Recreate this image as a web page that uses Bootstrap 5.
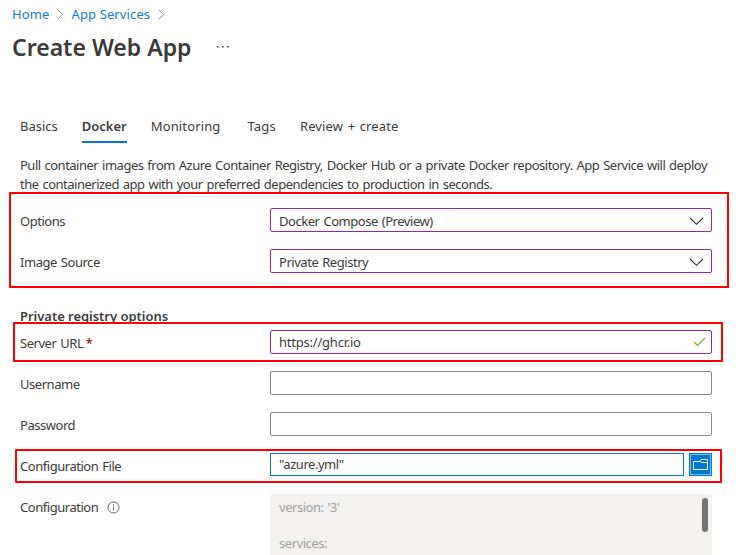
<!DOCTYPE html>
<html lang="en">
<head>
<meta charset="utf-8">
<meta name="viewport" content="width=device-width, initial-scale=1">
<title>Create Web App</title>
<link rel="stylesheet" href="https://cdn.jsdelivr.net/npm/bootstrap@5.3.0/dist/css/bootstrap.min.css">
<style>
body{font-family:"Noto Sans",sans-serif;font-size:13px;line-height:19px;color:#3b3a39;background:#fff;height:555px;overflow:hidden}
.crumbs{height:24px;padding:4px 0 0 12px;letter-spacing:.12px;gap:7.5px}
.crumbs a{color:#0f7bd4}
.page-title{font-size:23px;line-height:32px;font-weight:600;margin:0}
.title-row{padding:7px 0 0 12px;gap:26px}
.steps{margin:53px 0 0 20px;gap:24px}
.steps .nav-link{color:#3b3a39;padding:0 0 5px;border-radius:0;line-height:20px;height:27px}
.steps .nav-link.active{font-weight:600;border-bottom:2px solid #0078d4}
.steps .tab-wide{letter-spacing:.13px;word-spacing:1px}
.steps .tab-tags{margin-left:3px;letter-spacing:.2px}
.intro{margin:13px 0 0 20px;width:700px;letter-spacing:-.5px;word-spacing:1px;white-space:nowrap}
.fields{padding-left:20px;letter-spacing:-.46px;word-spacing:1px}
.fields-top{padding-top:14px}
.field-row{height:24px;margin-bottom:17px}
.field-label{width:250px;padding-top:4px}
.label-info{gap:9px}
.info-icon{margin-top:3px}
.field-box{width:442px;height:24px;border:1px solid #8a8886;border-radius:2px;padding:0 5px 0 8px}
.pick-text{padding-top:2px}
.url-text{letter-spacing:-.22px}
.edited{border-color:#8a2da5}
.file-box{width:414px;height:23px;border-color:#0078d4;border-radius:0}
.browse{width:23px;height:23px;margin-left:5px;background:#0078d4}
.section-head{font-size:13px;line-height:19px;font-weight:600;margin:0 0 4px 20px;padding-top:17px;letter-spacing:-.03px}
.yaml{width:442px;height:70px;background:#f3f2f1;color:#a19f9d;padding:4px 4px 0 9px;line-height:18px;border-radius:2px 2px 0 0}
.thumb{width:6px;height:34px;border-radius:3px;background:#737373}
.required{color:#a4262c;letter-spacing:0;font-weight:600;margin-left:-1.5px}
.callout{position:absolute;border:2px solid #f00;border-radius:1px;pointer-events:none}
.callout-options{left:9px;top:192px;width:720px;height:96px}
.callout-server{left:13px;top:322px;width:710px;height:40px}
.callout-file{left:15px;top:449px;width:707px;height:34px}
svg{display:block;flex:none;fill:none}
</style>
<script src="https://cdn.jsdelivr.net/npm/bootstrap@5.3.0/dist/js/bootstrap.bundle.min.js"></script>
</head>
<body class="position-relative">
<nav class="crumbs d-flex align-items-center">
  <a class="text-decoration-none" href="#">Home</a>
  <svg width="7" height="11" stroke="#8a8886"><path d="M1 1l4.700 4.500L1 10"/></svg>
  <a class="text-decoration-none" href="#">App Services</a>
  <svg width="7" height="11" stroke="#8a8886"><path d="M1 1l4.700 4.500L1 10"/></svg>
</nav>
<header class="title-row d-flex align-items-center">
  <h1 class="page-title">Create Web App</h1>
  <svg width="12" height="2"><path fill="#484644" d="M0 0h1.600v1.600H0zM5 0h1.600v1.600H5zM10 0h1.600v1.600h-1.600z"/></svg>
</header>
<ul class="nav steps">
  <li><a class="nav-link" href="#">Basics</a></li>
  <li><a class="nav-link active" href="#">Docker</a></li>
  <li><a class="nav-link tab-wide" href="#">Monitoring</a></li>
  <li><a class="nav-link tab-tags" href="#">Tags</a></li>
  <li><a class="nav-link tab-wide" href="#">Review + create</a></li>
</ul>
<p class="intro mb-0">Pull container images from Azure Container Registry, Docker Hub or a private Docker repository. App Service will deploy<br>the containerized app with your preferred dependencies to production in seconds.</p>
<main>
  <section class="fields fields-top">
    <div class="field-row d-flex"><div class="field-label">Options</div>
      <div class="field-box edited d-flex align-items-center justify-content-between"><span class="pick-text">Docker Compose (Preview)</span><svg width="18" height="12" stroke="#323130" stroke-width="1.1"><path d="M2 4L8.500 10.300 15 4"/></svg></div></div>
    <div class="field-row d-flex"><div class="field-label">Image Source</div>
      <div class="field-box edited d-flex align-items-center justify-content-between"><span class="pick-text">Private Registry</span><svg width="18" height="12" stroke="#323130" stroke-width="1.1"><path d="M2 4L8.500 10.300 15 4"/></svg></div></div>
  </section>
  <h2 class="section-head">Private registry options</h2>
  <section class="fields">
    <div class="field-row d-flex"><div class="field-label">Server URL <span class="required">*</span></div>
      <div class="field-box edited d-flex align-items-center justify-content-between"><span class="url-text">https://ghcr.io</span><svg width="13" height="10" stroke="#6bb536" stroke-width="1.2"><path d="M1 5l3.500 3.500L12 1"/></svg></div></div>
    <div class="field-row d-flex"><div class="field-label">Username</div><div class="field-box"></div></div>
    <div class="field-row d-flex"><div class="field-label">Password</div><div class="field-box"></div></div>
    <div class="field-row d-flex"><div class="field-label">Configuration File</div>
      <div class="field-box file-box d-flex align-items-center">"azure.yml"</div>
      <div class="browse"><svg width="23" height="23"><rect x="1.500" y="1.500" width="20" height="20" stroke="#fff" stroke-dasharray="1 1"/><path d="M4.500 8.500h6.500l1-2h6.500v10h-14zM11 8.500l1 1h6.500" stroke="#fff"/></svg></div></div>
    <div class="d-flex"><div class="field-label label-info d-flex">Configuration
        <svg class="info-icon" width="13" height="13" stroke="#605e5c"><circle cx="6.500" cy="6.500" r="5.500"/><path d="M6.500 5.500v4M6.500 3.300v1.200"/></svg></div>
      <div class="yaml d-flex justify-content-between"><div>version: '3'<br><br>services:</div><div class="thumb"></div></div></div>
  </section>
</main>
<div class="callout callout-options"></div>
<div class="callout callout-server"></div>
<div class="callout callout-file"></div>
</body>
</html>
